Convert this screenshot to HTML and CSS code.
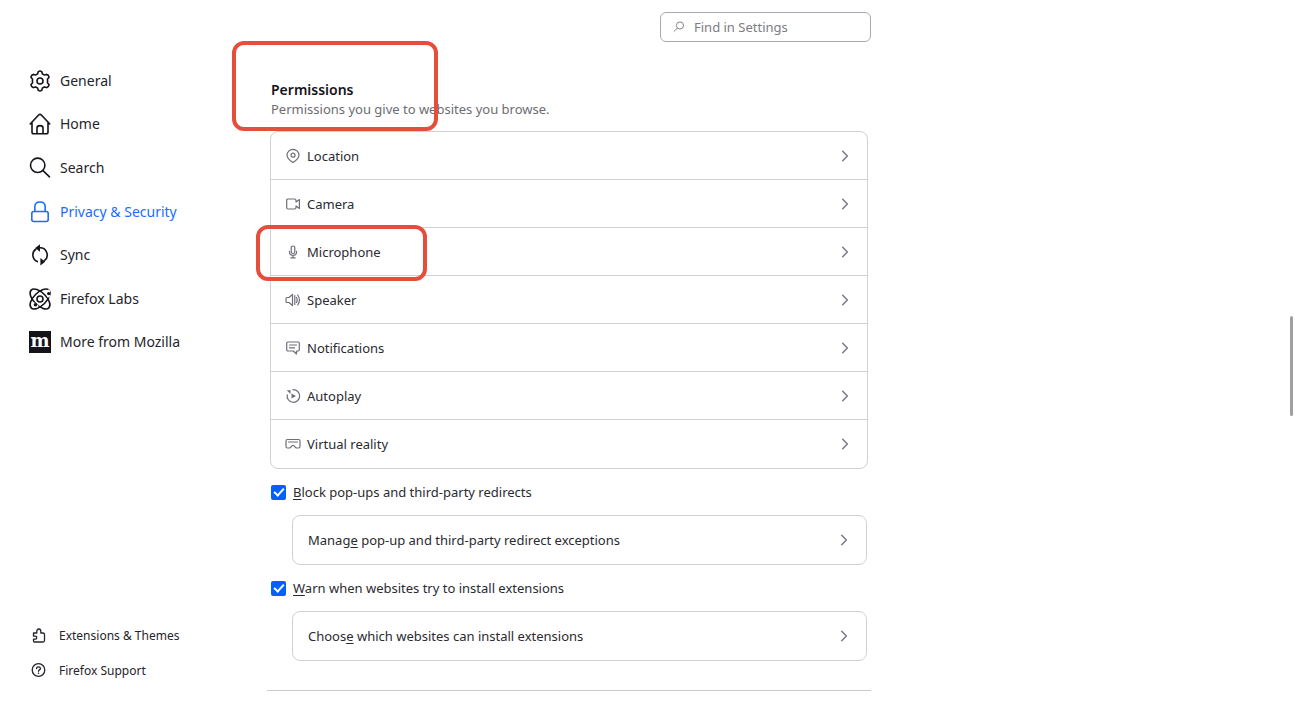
FILE: index.html
```
<!DOCTYPE html>
<html lang="en">

<head>
    <meta charset="UTF-8">
    <meta name="viewport" content="width=device-width, initial-scale=1.0">
    <title>Settings</title>
    <link rel="stylesheet" href="styles.css">
</head>

<body>
    <!-- shared chevron -->
    <svg class="defs" width="0" height="0" aria-hidden="true">
        <symbol id="chevron" viewBox="0 0 16 16">
            <path d="M5.7 3.2l4.700 4.800-4.700 4.800" />
        </symbol>
    </svg>

    <aside class="sidebar">
        <nav class="nav">
            <a href="#general">
                <svg viewBox="0 0 22 22"><circle cx="11" cy="11" r="3" /><path d="M9.2 1.8Q11 .2 12.8 1.8L13.4 4.1Q14.5 4.4 15.3 5L17.6 4.4Q19.8 4.9 20.1 7.3L18.4 9.2Q18.8 11 18.4 12.8L20.1 14.7Q19.8 17.1 17.6 17.6L15.3 17Q14.5 17.6 13.4 17.9L12.8 20.2Q11 21.8 9.2 20.2L8.6 17.9Q7.5 17.6 6.7 17L4.4 17.6Q2.2 17.1 1.9 14.7L3.6 12.8Q3.2 11 3.6 9.2L1.9 7.3Q2.2 4.9 4.4 4.4L6.7 5Q7.5 4.4 8.6 4.1Z" /></svg>
                <span>General</span>
            </a>
            <a href="#home">
                <svg viewBox="0 0 22 22"><path d="M1.2 11L9.6 2Q11 .8 12.4 2L20.8 11M3 9.500V19Q3 20.800 4.800 20.800H17.200Q19 20.800 19 19V9.500M8 20.500V15Q8 12.600 11 12.600T14 15V20.500" /></svg>
                <span>Home</span>
            </a>
            <a href="#search">
                <svg viewBox="0 0 22 22"><circle cx="8.7" cy="8.3" r="7.2" /><path d="M14 13.6l6.500 6.200" /></svg>
                <span>Search</span>
            </a>
            <a href="#privacy" class="active">
                <svg viewBox="0 0 22 22"><rect x="2.800" y="10.500" width="16.400" height="10" rx="2" /><path d="M5.800 10.500V6Q5.800 1 11 1T16.200 6V10.500" /></svg>
                <span>Privacy &amp; Security</span>
            </a>
            <a href="#sync">
                <svg viewBox="0 0 22 22"><path d="M8.300 17.600A7.200 7.200 0 0 1 7 5M11 3.800A7.200 7.200 0 0 1 15.400 16.700" /><path class="fill" d="M6.200 4L11 .2V7.800ZM16.200 17.700L11.400 13.900V21.600Z" /></svg>
                <span>Sync</span>
            </a>
            <a href="#labs">
                <svg viewBox="0 0 22 22"><circle cx="11" cy="11" r="3" /><ellipse cx="11" cy="11" rx="12.500" ry="6.300" transform="rotate(45 11 11)" /><ellipse cx="11" cy="11" rx="12.500" ry="6.300" transform="rotate(-45 11 11)" /><path class="gap" d="M19.500 3V8M4 15.500L8 18" /><circle class="fill" cx="19.700" cy="5.600" r="1.700" /><circle class="fill" cx="6.500" cy="16.700" r="1.800" /></svg>
                <span>Firefox Labs</span>
            </a>
            <a href="#more">
                <svg viewBox="0 0 22 22"><rect class="fill" width="22" height="22" /><text class="moz" x="11" y="16" text-anchor="middle">m</text></svg>
                <span>More from Mozilla</span>
            </a>
        </nav>

        <nav class="nav-small">
            <a href="#addons">
                <svg viewBox="0 0 16 16"><path d="M2.500 5H5.800V3.300Q5.800 1 7.800 1T9.800 3.300V5H12Q13.500 5 13.500 6.500V12.500Q13.500 14 12 14H3.500Q2.500 14 2.500 13V11.200H4.200Q5.700 11.200 5.700 9.700T4.200 8.200H2.500Z" /></svg>
                <span>Extensions &amp; Themes</span>
            </a>
            <a href="#support">
                <svg viewBox="0 0 16 16"><circle cx="7.500" cy="7" r="6.300" /><path d="M5.600 5.600Q5.600 3.800 7.500 3.800T9.400 5.400Q9.400 6.300 8.400 6.900Q7.500 7.500 7.500 8.300" /><circle class="fill" cx="7.500" cy="10.300" r=".8" /></svg>
                <span>Firefox Support</span>
            </a>
        </nav>
    </aside>

    <main class="content">
        <div class="search">
            <svg viewBox="0 0 12 12"><circle cx="7" cy="4.500" r="3.600" /><path d="M4.300 7.200L1 10.400" /></svg>
            <input type="search" placeholder="Find in Settings" aria-label="Find in Settings">
        </div>

        <section class="permissions">
            <div class="title">
                <h2>Permissions</h2>
                <p>Permissions you give to websites you browse.</p>
            </div>

            <div class="list">
                <button type="button">
                    <svg class="icon" viewBox="0 0 16 16"><circle cx="8" cy="7.200" r="2" /><path d="M8 14.500Q2 10.500 2 7.200A6 5.800 0 0 1 14 7.200Q14 10.500 8 14.500Z" /></svg>
                    <span>Location</span>
                    <svg class="arrow"><use href="#chevron" /></svg>
                </button>
                <button type="button">
                    <svg class="icon" viewBox="0 0 16 16"><path d="M3 3H9.500Q11 3 11 4.200V6L14.400 3.600V12.400L11 10V11.800Q11 13 9.500 13H3Q1.700 13 1.700 11.800V4.200Q1.700 3 3 3Z" /></svg>
                    <span>Camera</span>
                    <svg class="arrow"><use href="#chevron" /></svg>
                </button>
                <button type="button" class="marked">
                    <svg class="icon" viewBox="0 0 16 16"><rect x="6.200" y="2" width="3.600" height="7.500" rx="1.800" /><path d="M4.500 7.300V8.200Q4.500 11.300 8 11.300T11.500 8.200V7.300M8 11.300V13.800M5.800 13.800H10.200" /></svg>
                    <span>Microphone</span>
                    <svg class="arrow"><use href="#chevron" /></svg>
                </button>
                <button type="button">
                    <svg class="icon" viewBox="0 0 16 16"><path d="M7.500 2.500V13.500L4 10.500H2Q1 10.500 1 9.500V6.500Q1 5.500 2 5.500H4ZM9.800 3.500V12.500M11.500 5.500Q12.800 8 11.500 10.500M12.700 3Q16.200 8 12.700 13" /></svg>
                    <span>Speaker</span>
                    <svg class="arrow"><use href="#chevron" /></svg>
                </button>
                <button type="button">
                    <svg class="icon" viewBox="0 0 16 16"><path d="M3 2H13Q14.300 2 14.300 3.300V9.700Q14.300 11 13 11H11.500V14L8.300 11H3Q1.700 11 1.700 9.700V3.300Q1.700 2 3 2ZM4.500 5H11.500M4.500 7.800H9.500" /></svg>
                    <span>Notifications</span>
                    <svg class="arrow"><use href="#chevron" /></svg>
                </button>
                <button type="button">
                    <svg class="icon" viewBox="0 0 16 16"><path d="M8 1.700A6.300 6.300 0 1 1 2.200 6.800" /><path class="fill" d="M1.700 2.200H5.500V6ZM6.500 5.500l4.500 2.500-4.500 2.500z" /></svg>
                    <span>Autoplay</span>
                    <svg class="arrow"><use href="#chevron" /></svg>
                </button>
                <button type="button">
                    <svg class="icon" viewBox="0 0 16 16"><path d="M2.500 3.500H13.500Q15 3.500 15 5V10.500Q15 12 13.500 12H11.200L9 9.800Q8 9 7 9.800L4.800 12H2.500Q1 12 1 10.500V5Q1 3.500 2.500 3.500ZM3.500 6H12.500" /></svg>
                    <span>Virtual reality</span>
                    <svg class="arrow"><use href="#chevron" /></svg>
                </button>
            </div>

            <label class="check">
                <input type="checkbox" checked>
                <span><u>B</u>lock pop-ups and third-party redirects</span>
            </label>
            <button type="button" class="card">
                <span>Manag<u>e</u> pop-up and third-party redirect exceptions</span>
                <svg class="arrow"><use href="#chevron" /></svg>
            </button>

            <label class="check">
                <input type="checkbox" checked>
                <span><u>W</u>arn when websites try to install extensions</span>
            </label>
            <button type="button" class="card">
                <span>Choos<u>e</u> which websites can install extensions</span>
                <svg class="arrow"><use href="#chevron" /></svg>
            </button>
        </section>
        <hr>
    </main>

    <div class="scroll-thumb"></div>
</body>

</html>
```
FILE: styles.css
```
*,
*::before,
*::after {
    margin: 0;
    padding: 0;
    box-sizing: border-box;
}

body {
    display: flex;
    min-height: 100vh;
    background: #fff;
    color: #2b2a31;
    font-family: "Noto Sans", "Open Sans", sans-serif;
    font-size: 13px;
    line-height: 20px;
}

button,
input {
    font: inherit;
    color: inherit;
}

svg {
    flex: none;
    fill: none;
    stroke: currentColor;
    stroke-linecap: round;
    stroke-linejoin: round;
}

.fill {
    fill: currentColor;
    stroke: none;
}

.defs {
    position: absolute;
}

/* sidebar */
.sidebar {
    display: flex;
    flex: none;
    flex-direction: column;
    justify-content: space-between;
    width: 267px;
    padding: 59px 12px 18px 29px;
}

.sidebar a {
    display: flex;
    align-items: center;
    color: #25242b;
    text-decoration: none;
}

.nav {
    display: flex;
    flex-direction: column;
    min-height: 305px;
    font-size: 14px;
}

.nav a {
    flex: 1;
    gap: 9px;
}

.nav svg {
    width: 22px;
    height: 22px;
    overflow: visible;
    color: #15141a;
    stroke-width: 1.6;
}

.nav .gap {
    stroke: #fff;
    stroke-width: 3;
}

.sidebar .active,
.sidebar .active svg {
    color: #1a6dff;
}

.nav .moz {
    fill: #fff;
    stroke: none;
    font: bold 18px "DejaVu Serif", serif;
}

.nav-small {
    font-size: 12px;
}

.nav-small a {
    height: 35px;
    gap: 12px;
    padding-left: 2px;
}

.nav-small svg {
    width: 16px;
    height: 16px;
    stroke-width: 1.3;
}

/* content */
.content {
    flex: 1;
    max-width: 604px;
    padding-top: 12px;
}

.search {
    display: flex;
    align-items: center;
    gap: 9px;
    width: 211px;
    height: 30px;
    margin: 0 0 38px auto;
    padding: 0 12px;
    border: 1px solid #a9a9b2;
    border-radius: 6px;
    color: #85858c;
}

.search svg {
    width: 12px;
    height: 12px;
}

.search input {
    flex: 1;
    min-width: 0;
    border: 0;
    outline: 0;
    background: none;
}

.search input::placeholder {
    color: #7d7d82;
    opacity: 1;
}

.permissions {
    padding: 0 3px;
}

.title {
    position: relative;
    padding-left: 1px;
    margin-bottom: 12px;
}

.title h2 {
    font-size: 14px;
    font-weight: 600;
    color: #15141a;
}

.title p {
    line-height: 19px;
    color: #6c6c72;
}

/* red highlight frames */
.title::after,
.marked::after {
    content: "";
    position: absolute;
    z-index: 1;
    border: 4px solid #e64e3c;
    border-radius: 12px;
    pointer-events: none;
}

.title::after {
    top: -39px;
    left: -38px;
    width: 206px;
    height: 90px;
}

.marked::after {
    top: -3px;
    left: -15px;
    width: 171px;
    height: 56px;
}

.list {
    border: 1px solid #d0d0d7;
    border-radius: 8px;
}

.list button {
    position: relative;
    display: flex;
    align-items: center;
    gap: 6px;
    width: 100%;
    height: 48px;
    padding: 0 14px;
    border: 0;
    border-bottom: 1px solid #d0d0d7;
    background: none;
    text-align: left;
}

.list button:last-child {
    border-bottom: 0;
}

.icon {
    width: 16px;
    height: 16px;
    color: #6f6e79;
    stroke-width: 1.2;
}

.arrow {
    width: 16px;
    height: 16px;
    margin-left: auto;
    color: #7b7a84;
    stroke-width: 1.5;
}

.check {
    display: flex;
    align-items: center;
    gap: 7px;
    margin: 13px 0 13px 1px;
}

.check input {
    appearance: none;
    display: grid;
    place-items: center;
    width: 15px;
    height: 15px;
    border-radius: 2px;
    background: #0062fa;
}

.check input:checked::after {
    content: "";
    width: 6px;
    height: 10px;
    margin-bottom: 3px;
    border: solid #fff;
    border-width: 0 2px 2px 0;
    transform: rotate(42deg);
}

u {
    text-underline-offset: 2px;
}

.card {
    display: flex;
    align-items: center;
    width: calc(100% - 23px);
    height: 50px;
    margin-left: 22px;
    padding: 0 14px 0 15px;
    border: 1px solid #d0d0d7;
    border-radius: 8px;
    background: none;
    text-align: left;
}

hr {
    margin-top: 29px;
    border: 0;
    border-top: 1px solid #c8c8cd;
}

.scroll-thumb {
    position: fixed;
    top: 316px;
    right: 2px;
    width: 3px;
    height: 100px;
    border-radius: 2px;
    background: #a0a0a0;
}
```
